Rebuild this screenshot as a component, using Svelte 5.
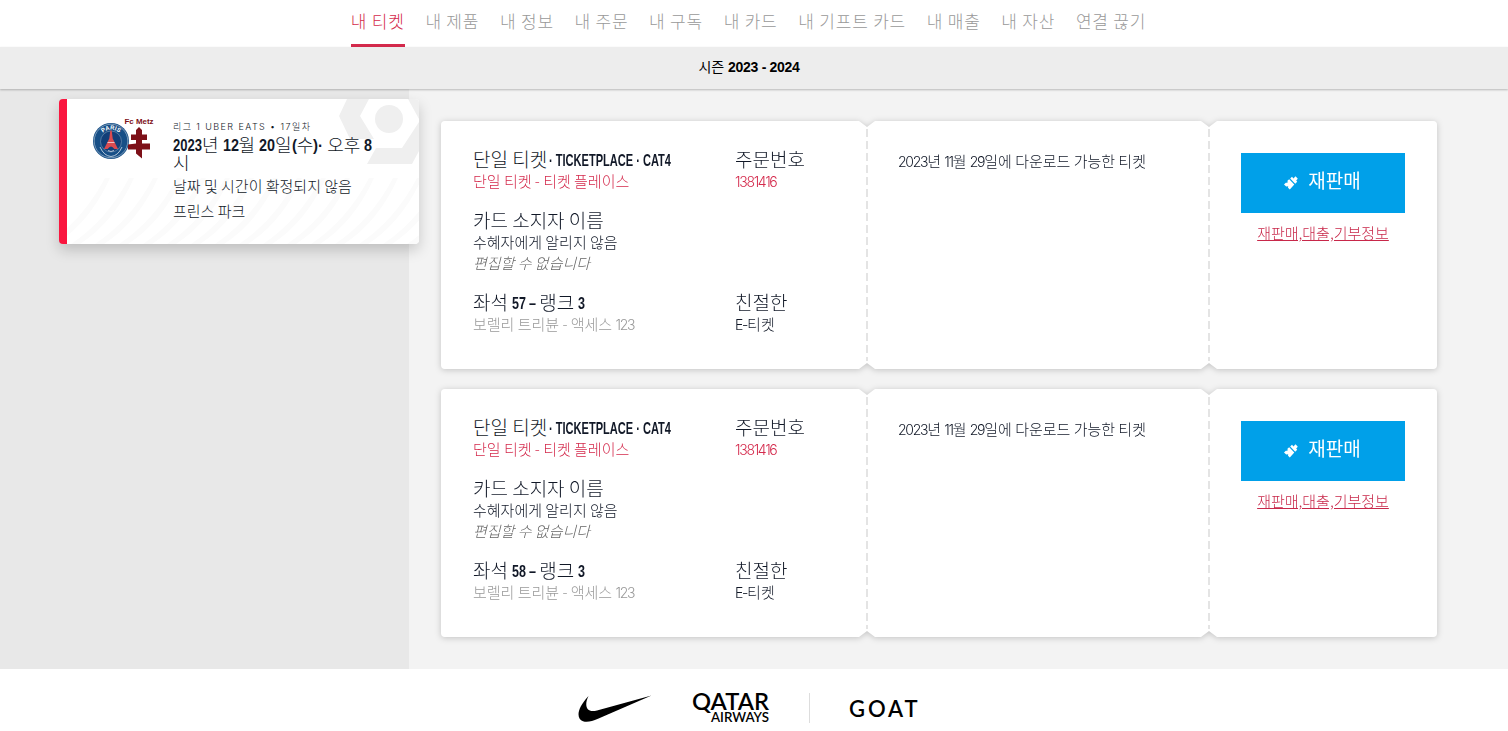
<script lang="ts">
  type Ticket = { seat: string };

  const links = ['내 티켓', '내 제품', '내 정보', '내 주문', '내 구독', '내 카드', '내 기프트 카드', '내 매출', '내 자산', '연결 끊기'];
  const tickets: Ticket[] = [{ seat: '57' }, { seat: '58' }];
  const stripes = Array.from({ length: 18 }, (_, i) => i * 24);
</script>

{#snippet condensed(text: string, width: number)}
  <svg class="condensed" {width} height="13"><text y="12" textLength={width} lengthAdjust="spacingAndGlyphs">{text}</text></svg>
{/snippet}

<nav>
  {#each links as link, i}
    <a href="#top" class:isActive={i === 0}>{link}</a>
  {/each}
</nav>
<div class="season">시즌 <b>2023 - 2024</b></div>

<main>
  <aside>
    <div class="match">
      <svg class="pattern" viewBox="0 0 352 145" width="352" height="145">
        {#each stripes as x}
          <path d="M{x - 20} 145q36 -24 58 -66h5q-20 44 -54 66z" fill="#fbfbfb" />
        {/each}
        <path d="M280 0L272 17L283 40H307L293 17L302 0z" fill="#efefef" />
        <path d="M352 23L335 49H309L300 65H345L352 52z" fill="#efefef" />
        <path d="M341 0L352 20V0z" fill="#efefef" />
        <circle cx="322" cy="20" r="14" fill="#efefef" />
      </svg>
      <svg class="clubs" viewBox="0 0 64 48" width="64" height="48">
        <circle cx="18" cy="27" r="18" fill="#174f87" />
        <circle cx="18" cy="27" r="16.8" fill="none" stroke="#b8c9d8" stroke-width=".6" />
        <circle cx="18" cy="27.500" r="10.5" fill="#123f78" stroke="#8fa9c2" stroke-width=".5" />
        <path id="arc" d="M6.300 25A12 12 0 0 1 29.700 25" fill="none" />
        <text class="paris"><textPath href="#arc" startOffset="50%" text-anchor="middle">PARIS</textPath></text>
        <path d="M17.300 16.500h1.400l1 8l5.300 10.500h-3.600q-3.400 -5 -6.800 0h-3.600l5.300 -10.500z" fill="#d94b50" />
        <path d="M14.500 28.500h7" stroke="#f2dede" stroke-width=".8" />
        <path d="M15 36.500q3 2 6 0M7 33q4 9 11 9.500q7 -.5 11 -9.500" stroke="#dbe5ee" stroke-width=".8" fill="none" />
        <path d="M43 16l3 -3l3 3v4.500h5v5.500h-5v3.500h8v6h-8v9l-6 -5v-4h-8v-5l8 -1v-3.500h-5v-5.500h5z" fill="#7d1018" />
        <text class="metz" x="31.500" y="10" textLength="29" lengthAdjust="spacingAndGlyphs">Fc Metz</text>
      </svg>
      <div class="details">
        <div class="league">리그 1 UBER EATS • 17일차</div>
        <div class="date">
          {@render condensed('2023', 29)}년 {@render condensed('12', 16)}월 {@render condensed('20', 16)}일{@render condensed('(', 5)}수{@render condensed(')·', 10)} 오후 {@render condensed('8', 8)}<br />시
        </div>
        <div class="place">날짜 및 시간이 확정되지 않음</div>
        <div class="place">프린스 파크</div>
      </div>
    </div>
  </aside>

  <section>
    {#each tickets as ticket}
      <article>
        <div class="ticket">
          <div class="info">
            <div>
              <h3>단일 티켓<span class="category">{@render condensed('· TICKETPLACE · CAT4', 122)}</span></h3>
              <p class="red">단일 티켓 - 티켓 플레이스</p>
            </div>
            <div>
              <h3>주문번호</h3>
              <p class="red order"><span class="num">1381416</span></p>
            </div>
            <div class="holder">
              <h3>카드 소지자 이름</h3>
              <p>수혜자에게 알리지 않음</p>
              <p class="locked">편집할 수 없습니다</p>
            </div>
            <div>
              <h3 class="seat">좌석 {@render condensed(ticket.seat + ' –', 24)} 랭크 {@render condensed('3', 7)}</h3>
              <p class="grey">보렐리 트리뷴 - 액세스 <span class="num">123</span></p>
            </div>
            <div>
              <h3>친절한</h3>
              <p><span class="num">E-</span>티켓</p>
            </div>
          </div>
          <div class="download">
            <p><span class="num">2023</span>년 <span class="num">11</span>월 <span class="num">29</span>일에 다운로드 가능한 티켓</p>
          </div>
          <div class="actions">
            <button>
              <svg viewBox="0 0 14 14" width="14" height="14">
                <path d="M0 8.500L1.800 6.800L3.500 6.700L3.600 4.600L5.200 3.200L10.300 8.600L5.800 13.500L4 11.700L4.200 10.200L2.200 10.600z" fill="#fff" />
                <path d="M6.200 2.400L8 .8L9.500 2.400L11.500 .3L13.800 2.800L12.200 4.400L13.200 5.700L11.200 7.700z" fill="#fff" />
              </svg>
              재판매
            </button>
            <a href="#resale">재판매,대출,기부정보</a>
          </div>
        </div>
      </article>
    {/each}
  </section>
</main>

<footer>
  <svg class="nike" viewBox="0 0 74 27" width="74" height="27">
    <path d="M73.500 .5L20 23.800C14 26.500 9 27.500 5 26.300C-1.800 23.500 -1.500 14 10.500 1C6 10 8 18.500 19 15.500z" />
  </svg>
  <svg class="qatar" viewBox="0 0 80 42" width="80" height="42">
    <text class="qatarTop" x="0" y="24" textLength="77" lengthAdjust="spacingAndGlyphs">QATAR</text>
    <text class="qatarBottom" x="19" y="36" textLength="58" lengthAdjust="spacingAndGlyphs">AIRWAYS</text>
  </svg>
  <span class="divider"></span>
  <span class="goat">GOAT</span>
</footer>

<style>
  :global(body) {
    background: #fff;
    color: #111827;
    font-family: "Liberation Sans", "Noto Sans CJK KR", sans-serif;
    overflow: hidden;
  }
  nav {
    height: 47px;
    box-sizing: border-box;
    display: flex;
    justify-content: center;
    gap: 20.7px;
    padding-right: 11px;
  }
  nav a {
    box-sizing: border-box;
    height: 47px;
    font: 300 17px/41px "Noto Sans CJK KR", sans-serif;
    letter-spacing: 0.8px;
    color: #999;
    text-decoration: none;
  }
  nav a.isActive {
    color: #d42a4c;
    border-bottom: 3px solid #d42a4c;
  }
  .season {
    position: relative;
    z-index: 1;
    height: 42px;
    box-sizing: border-box;
    padding-right: 10px;
    background: #ededed;
    box-shadow: 0 1px 2px rgba(0, 0, 0, 0.25);
    color: #000;
    font-size: 14px;
    line-height: 40px;
    text-align: center;
  }
  .season b {
    letter-spacing: -0.3px;
  }
  main {
    display: flex;
    height: 580px;
    background: #f3f3f3;
  }
  aside {
    width: 409px;
    box-sizing: border-box;
    padding: 10px 0 0 59px;
    background: #e8e8e8;
  }
  .match {
    position: relative;
    display: flex;
    width: 360px;
    height: 145px;
    box-sizing: border-box;
    border-left: 8px solid #fa163f;
    border-radius: 4px;
    background: #fff;
    box-shadow: 0 6px 14px rgba(0, 0, 0, 0.18);
    overflow: hidden;
  }
  .pattern {
    position: absolute;
    inset: 0;
  }
  .clubs {
    position: relative;
    margin: 15px 16px 0 26px;
  }
  .paris {
    font: bold 6px "Liberation Sans", sans-serif;
    fill: #fff;
  }
  .metz {
    font: bold 8px "Liberation Sans", sans-serif;
    fill: #7d1018;
  }
  .condensed {
    overflow: visible;
  }
  .condensed text {
    font: bold 17px "Liberation Sans", sans-serif;
    fill: #111827;
  }
  .details {
    position: relative;
    padding-top: 20px;
    white-space: nowrap;
  }
  .league {
    font: 300 9px/16px Inter, "Noto Sans CJK KR", sans-serif;
    letter-spacing: 1.42px;
  }
  .date {
    height: 36px;
    margin-bottom: 2px;
    font: 300 18px/18px "Noto Sans CJK KR", sans-serif;
  }
  .place {
    font: 300 15px/25px "Noto Sans CJK KR", sans-serif;
  }
  section {
    flex: 1;
    padding: 32px;
  }
  article {
    width: 996px;
    margin-bottom: 20px;
    filter: drop-shadow(0 1px 3px rgba(0, 0, 0, 0.2));
  }
  .ticket {
    display: grid;
    grid-template-columns: 426px 342px 228px;
    height: 248px;
    border-radius: 4px;
    background: #fff;
    clip-path: polygon(0 0, 418px 0, 426px 6px, 434px 0, 760px 0, 768px 6px, 776px 0, 100% 0, 100% 100%, 776px 100%, 768px 242px, 760px 100%, 434px 100%, 426px 242px, 418px 100%, 0 100%);
  }
  .info {
    display: grid;
    grid-template-columns: 262px 1fr;
    align-content: start;
    row-gap: 19px;
    padding: 28px 0 0 32px;
  }
  .holder {
    grid-column: 1 / 3;
  }
  h3 {
    height: 21px;
    margin: 0;
    font: 300 19px/20px "Noto Sans CJK KR", sans-serif;
    white-space: nowrap;
  }
  .category {
    margin-left: 2px;
  }
  .seat {
    word-spacing: -0.5px;
  }
  p {
    height: 21px;
    margin: 0;
    font: 300 15px/21px "Noto Sans CJK KR", sans-serif;
    white-space: nowrap;
  }
  .num {
    font-family: Inter, sans-serif;
    font-size: 14px;
    line-height: 1;
    letter-spacing: -1.3px;
  }
  .red {
    color: #d42a4c;
  }
  .grey {
    color: #999;
  }
  .locked {
    color: #666;
    font-style: italic;
  }
  .download,
  .actions {
    margin-left: -1px;
    padding: 29px 0 0 32px;
    background: repeating-linear-gradient(#e4e4e4 0 8px, transparent 8px 12px) 0 8px / 2px 232px no-repeat;
  }
  .actions {
    padding: 32px 32px 0 33px;
    text-align: center;
  }
  button {
    display: flex;
    align-items: center;
    justify-content: center;
    gap: 10px;
    width: 164px;
    height: 60px;
    border: 0;
    padding: 0 1px 7px 0;
    background: #00a0e9;
    color: #fff;
    font: 400 19px "Noto Sans CJK KR", sans-serif;
  }
  button svg {
    margin-top: 6px;
  }
  .actions a {
    display: block;
    color: #c8284a;
    font: 300 15px/40px "Noto Sans CJK KR", sans-serif;
  }
  footer {
    display: flex;
    align-items: center;
    height: 62px;
    padding-left: 578px;
  }
  .nike {
    margin-bottom: -16px;
  }
  .qatar {
    margin: 14px 0 0 40px;
  }
  .qatarTop {
    font: 600 23px Lato, sans-serif;
  }
  .qatarBottom {
    font: 600 13px Lato, sans-serif;
  }
  .divider {
    width: 1px;
    height: 30px;
    margin: 16px 39px 0 37px;
    background: #ddd;
  }
  .goat {
    margin-top: 16px;
    color: #000;
    font: 600 22px Lato, sans-serif;
    letter-spacing: 2.9px;
  }
</style>
